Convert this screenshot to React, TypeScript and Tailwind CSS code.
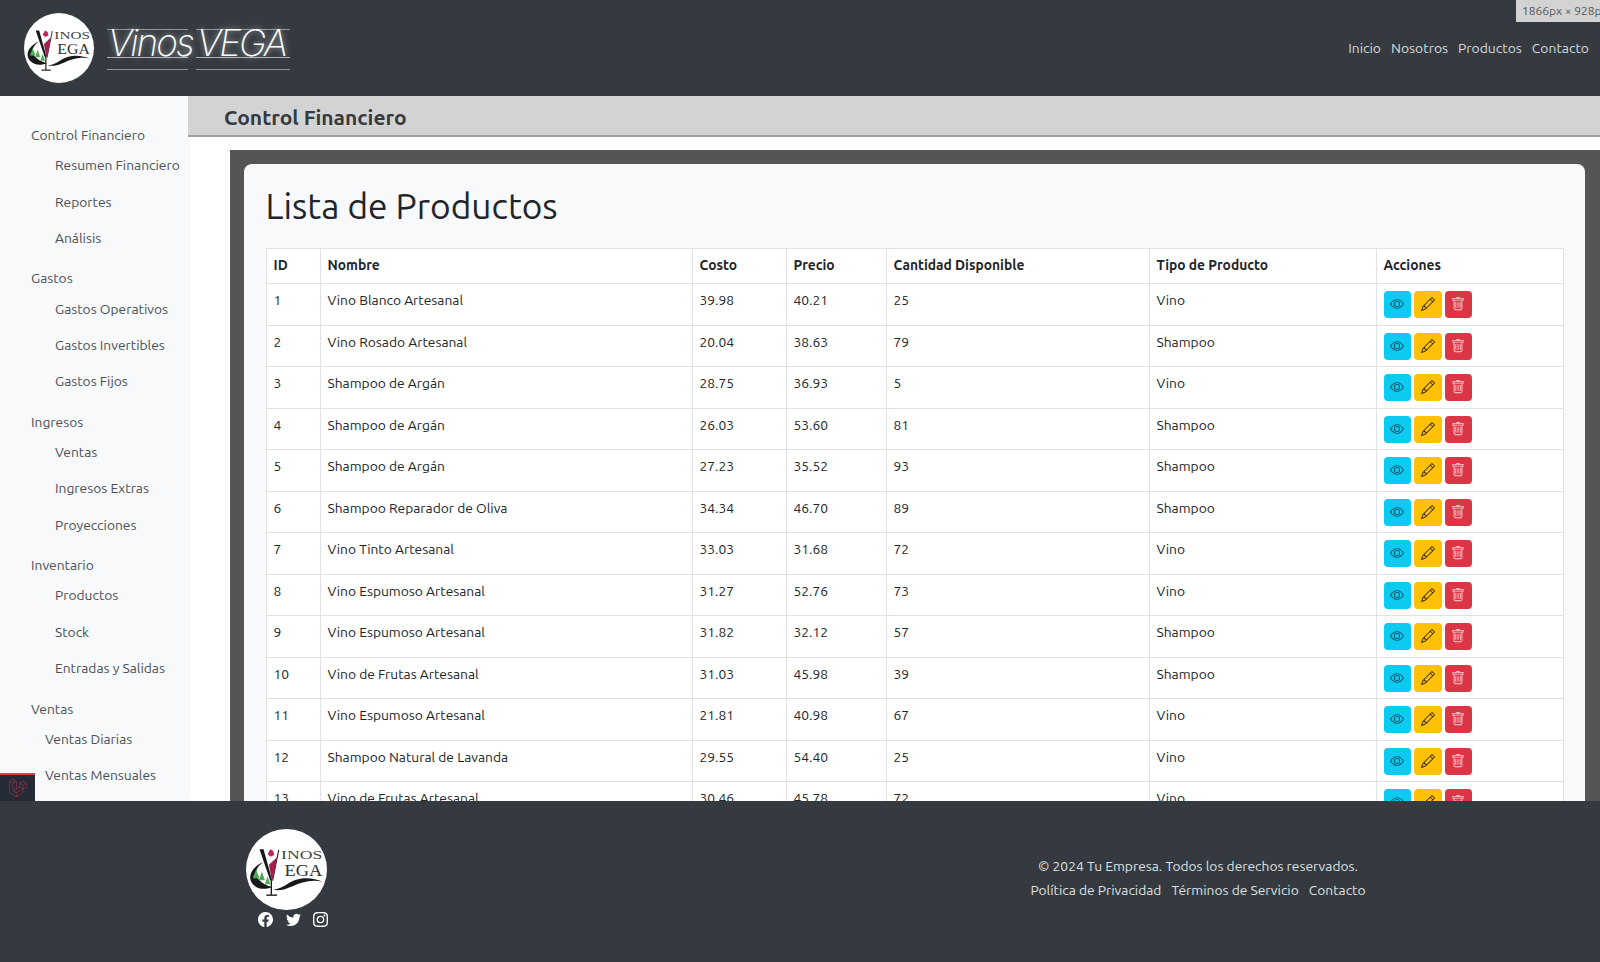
import { BsEye, BsFacebook, BsInstagram, BsPencil, BsTrash, BsTwitter } from "react-icons/bs";
import { FaLaravel } from "react-icons/fa";

const font = "font-['Ubuntu','Noto_Sans',sans-serif]";

const sidebar = [
  { title: "Control Financiero", items: ["Resumen Financiero", "Reportes", "Análisis"] },
  { title: "Gastos", items: ["Gastos Operativos", "Gastos Invertibles", "Gastos Fijos"] },
  { title: "Ingresos", items: ["Ventas", "Ingresos Extras", "Proyecciones"] },
  { title: "Inventario", items: ["Productos", "Stock", "Entradas y Salidas"] },
  { title: "Ventas", items: ["Ventas Diarias", "Ventas Mensuales"] },
];

const productos = [
  [1, "Vino Blanco Artesanal", "39.98", "40.21", 25, "Vino"],
  [2, "Vino Rosado Artesanal", "20.04", "38.63", 79, "Shampoo"],
  [3, "Shampoo de Argán", "28.75", "36.93", 5, "Vino"],
  [4, "Shampoo de Argán", "26.03", "53.60", 81, "Shampoo"],
  [5, "Shampoo de Argán", "27.23", "35.52", 93, "Shampoo"],
  [6, "Shampoo Reparador de Oliva", "34.34", "46.70", 89, "Shampoo"],
  [7, "Vino Tinto Artesanal", "33.03", "31.68", 72, "Vino"],
  [8, "Vino Espumoso Artesanal", "31.27", "52.76", 73, "Vino"],
  [9, "Vino Espumoso Artesanal", "31.82", "32.12", 57, "Shampoo"],
  [10, "Vino de Frutas Artesanal", "31.03", "45.98", 39, "Shampoo"],
  [11, "Vino Espumoso Artesanal", "21.81", "40.98", 67, "Vino"],
  [12, "Shampoo Natural de Lavanda", "29.55", "54.40", 25, "Vino"],
  [13, "Vino de Frutas Artesanal", "30.46", "45.78", 72, "Vino"],
];

const headers = ["ID", "Nombre", "Costo", "Precio", "Cantidad Disponible", "Tipo de Producto", "Acciones"];

function Logo({ className }: { className: string }) {
  return (
    <svg viewBox="0 0 240 240" className={className}>
      <circle cx="120" cy="120" r="120" fill="#fff" />
      {/* crescent and wave */}
      <path d="M52 98 C14 112 -2 150 28 170 C44 181 64 178 78 172 C52 166 36 150 30 140 C26 124 36 108 52 98Z" fill="#16181a" />
      <path d="M80 180 C114 178 126 152 165 147 C190 144 210 150 226 156 C205 151 186 153 165 159 C136 167 114 186 80 180Z" fill="#16181a" />
      {/* trees */}
      <path d="M20 146 l10 -26 10 26z M38 152 l9 -26 9 26z M56 164 l8 -24 8 24z" fill="#4fae55" />
      {/* glass */}
      <path d="M40 60 L52 60 L78 153 L72 153 Z" fill="#16181a" />
      <path d="M97 62 L79 153" stroke="#16181a" strokeWidth="3" />
      <path d="M68 106 L92 84 L80 148 L76 148 Z" fill="#a61e4d" />
      <path d="M72 60 l9 5 3 12 -12 5 -8 -8 z" fill="#c2255c" />
      <path d="M75 153 V195" stroke="#16181a" strokeWidth="4" />
      <path d="M60 196 H92" stroke="#16181a" strokeWidth="4" />
      <text x="104" y="88" fontFamily="Liberation Serif" fontSize="36" fill="#444" textLength="122" lengthAdjust="spacingAndGlyphs">INOS</text>
      <text x="114" y="140" fontFamily="Liberation Serif" fontSize="48" fill="#333" textLength="112" lengthAdjust="spacingAndGlyphs">EGA</text>
    </svg>
  );
}

function BrandWord({ children, width }: { children: string; width: string }) {
  return (
    <span className={`relative block h-[41px] border-y border-[#8f969c] ${width}`}>
      <span className="absolute left-0 right-0 top-[27px] h-px bg-[#aab0b5]" />
      <span className="absolute left-[1px] top-[-9px] leading-[44px]">{children}</span>
    </span>
  );
}

function Brand() {
  return (
    <div className="ml-[13px] mt-[3px] flex gap-[8px] whitespace-nowrap font-['Inter','Liberation_Sans',sans-serif] text-[37px] font-extralight italic tracking-[-2px] text-white [text-shadow:0_0_6px_#ffffffb0]">
      <BrandWord width="w-[81px]">Vinos</BrandWord>
      <BrandWord width="w-[94px]">VEGA</BrandWord>
    </div>
  );
}

export default function App() {
  return (
    <div className={`flex h-[962px] w-[1600px] flex-col overflow-hidden bg-white text-[13.8px] text-[#212529] ${font}`}>
      <header className="relative flex h-[96px] shrink-0 items-center justify-between bg-[#343a40] pl-[24px] pr-[11px]">
        <div className="flex items-center">
          <Logo className="h-[70px] w-[70px]" />
          <Brand />
        </div>
        <nav className="flex gap-[10px] text-[13.9px] text-[#d9dadb]">
          <span>Inicio</span>
          <span>Nosotros</span>
          <span>Productos</span>
          <span>Contacto</span>
        </nav>
        <div className="absolute right-0 top-0 h-[22px] w-[84px] overflow-hidden whitespace-nowrap bg-[#d3d3d3] pl-[6px] text-[12px] leading-[22px] text-[#555]">1866px × 928px</div>
      </header>

      <div className="flex h-[705px] shrink-0">
        <aside className="relative w-[188px] shrink-0 overflow-hidden bg-[#f8f9fa] pt-[29px] text-[13.8px] text-[#495057]">
          {sidebar.map((group, g) => (
            <div key={group.title} className="mb-[8px] pl-[31px]">
              <div className="h-[20px] leading-[20px]">{group.title}</div>
              <ul className={g === 4 ? "pl-[14px] pt-[6.5px]" : "pl-[24px] pt-[6.5px]"}>
                {group.items.map((item) => (
                  <li key={item} className="flex h-[36.3px] items-center whitespace-nowrap pb-[8px]">{item}</li>
                ))}
              </ul>
            </div>
          ))}
          <div className="absolute bottom-0 left-0 flex h-[28px] w-[35px] items-center justify-center border-t-2 border-[#d9443c] bg-[#252a37]">
            <FaLaravel className="h-[18px] w-[18px] text-[#a8304a]" />
          </div>
        </aside>

        <main className="min-w-0 flex-1 overflow-hidden shadow-[inset_2px_0_3px_#0000000a]">
          <div className="h-[41px] border-b-2 border-[#a0a0a0] bg-[#d3d3d3] pl-[36px] pt-[7px] text-[21px] font-bold leading-[28px] text-[#343a40]">Control Financiero</div>
          <div className="ml-[42px] mt-[13px] h-[700px] bg-[#555] pb-[14px] pl-[14px] pr-[15px] pt-[14px]">
            <div className="h-full rounded-[8px] bg-[#f8f9fa] pl-[21.5px] pr-[22px] pt-[20px]">
              <h1 className="mb-[20px] whitespace-nowrap text-[35.3px] font-normal leading-[44px]">Lista de Productos</h1>
              <table className="w-[1297.5px] table-fixed border-collapse bg-white text-[13.8px]">
                <colgroup>
                  <col className="w-[54px]" />
                  <col className="w-[372px]" />
                  <col className="w-[94px]" />
                  <col className="w-[100px]" />
                  <col className="w-[263px]" />
                  <col className="w-[227px]" />
                  <col className="w-[187.5px]" />
                </colgroup>
                <thead>
                  <tr className="h-[35px]">
                    {headers.map((h) => (
                      <th key={h} className="border border-[#dee2e6] px-[7px] pb-[2px] text-left font-bold">{h}</th>
                    ))}
                  </tr>
                </thead>
                <tbody>
                  {productos.map((row, r) => (
                    <tr key={row[0]} className={r % 2 === 0 ? "h-[42px]" : "h-[41px]"}>
                      {row.map((cell, i) => (
                        <td key={i} className="border border-[#dee2e6] px-[7px] pt-[6px] align-top leading-[20px]">{cell}</td>
                      ))}
                      <td className="border border-[#dee2e6] px-[7px] pt-[7px] align-top">
                        <div className="flex gap-[3px]">
                          <button className="flex h-[26.5px] w-[27.5px] items-center justify-center rounded-[4px] bg-[#0dcaf0] text-[#07485a]"><BsEye className="h-[14px] w-[14px]" /></button>
                          <button className="flex h-[26.5px] w-[27.5px] items-center justify-center rounded-[4px] bg-[#ffc107] text-[#2b2100]"><BsPencil className="h-[14px] w-[14px]" /></button>
                          <button className="flex h-[26.5px] w-[27.5px] items-center justify-center rounded-[4px] bg-[#dc3545] text-[#fbd5d9]"><BsTrash className="h-[14px] w-[14px]" /></button>
                        </div>
                      </td>
                    </tr>
                  ))}
                </tbody>
              </table>
            </div>
          </div>
        </main>
      </div>

      <footer className="flex h-[161px] shrink-0 bg-[#343a40] text-[#dfe0e2]">
        <div className="ml-[246px] mt-[28px] flex w-[82px] flex-col items-start">
          <Logo className="h-[81px] w-[81px]" />
          <div className="ml-[12px] mt-[2px] flex gap-[12.5px] text-white">
            <BsFacebook className="h-[15px] w-[15px]" />
            <BsTwitter className="h-[15px] w-[15px]" />
            <BsInstagram className="h-[15px] w-[15px]" />
          </div>
        </div>
        <div className="ml-[680px] mt-[53px] w-[380px] whitespace-nowrap text-center text-[13.8px] leading-[24px]">
          <p>© 2024 Tu Empresa. Todos los derechos reservados.</p>
          <p className="flex justify-center gap-[10px]">
            <span>Política de Privacidad</span>
            <span>Términos de Servicio</span>
            <span>Contacto</span>
          </p>
        </div>
      </footer>
    </div>
  );
}
